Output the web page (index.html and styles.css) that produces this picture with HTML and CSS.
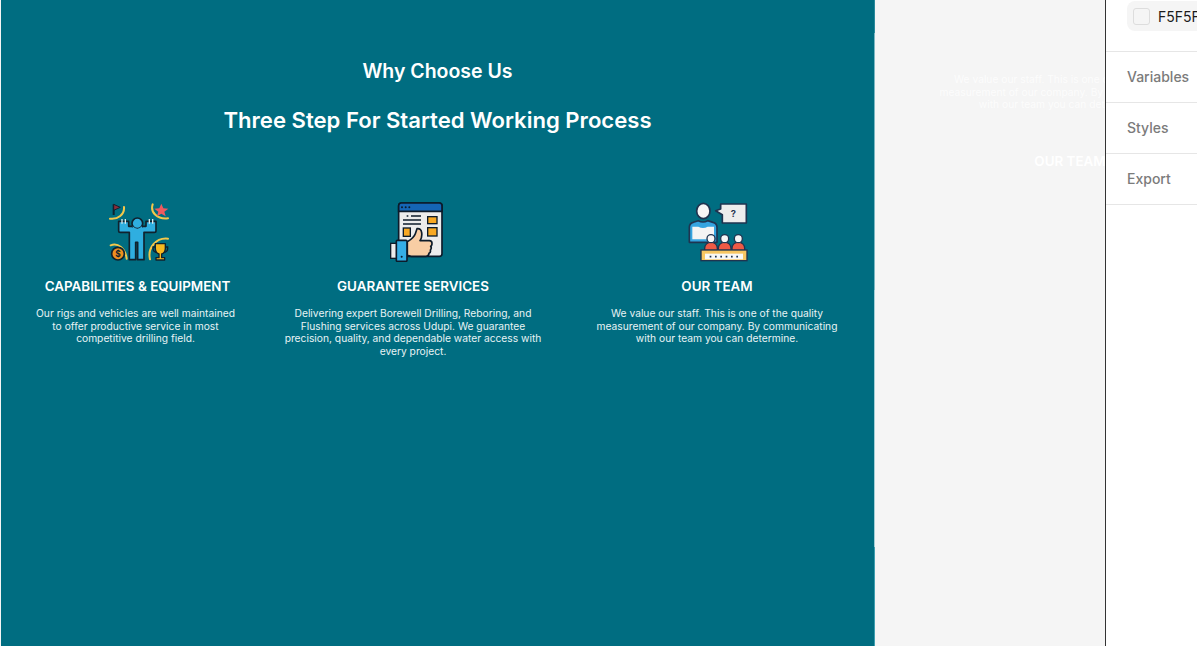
FILE: index.html
```html
<!DOCTYPE html>
<html lang="en">
<head>
<meta charset="utf-8">
<title>Why Choose Us</title>
<link rel="stylesheet" href="styles.css">
</head>
<body>
<main class="stage">
  <section class="why">
    <h2 class="why-eyebrow">Why Choose Us</h2>
    <h1 class="why-title">Three Step For Started Working Process</h1>
    <div class="cards">
      <article class="card card-one">
        <svg class="icon" viewBox="55 35 180 180" aria-hidden="true">
          <g fill="none" stroke="#f4c84a" stroke-width="6" stroke-linecap="round">
            <path d="M100 50c2 22-18 38-42 35"/>
            <path d="M186 42c-8 24 14 46 46 42"/>
            <path d="M60 165c22-8 44 8 48 40"/>
            <path d="M178 207c-8-34 18-66 54-62"/>
          </g>
          <path d="M69 42v32" stroke="#10222e" stroke-width="6"/>
          <path d="M69 42l20 9-20 9z" fill="#8c2d3a" stroke="#10222e" stroke-width="3"/>
          <path d="M212 40l6 14 15 1-12 9 4 14-13-8-13 8 4-14-12-9 15-1z" fill="#ef5a5f"/>
          <path d="M84 93h30v15h8q18 10 36 0h8V93h30v28q0 5-5 5h-31v82h-19v-52h-6v52h-19v-82H89q-5 0-5-5z" fill="#2faee0" stroke="#10222e" stroke-width="5" stroke-linejoin="round"/>
          <path d="M94 86v14M104 86v14M176 86v14M186 86v14" stroke="#dfe9ec" stroke-width="4"/>
          <circle cx="140" cy="99" r="16" fill="#2faee0" stroke="#10222e" stroke-width="5"/>
          <path d="M126 108q14 14 28 0v14h-28z" fill="#2faee0"/>
          <circle cx="82" cy="190" r="19" fill="#ef8f1f" stroke="#10222e" stroke-width="5"/>
          <text class="icon-dollar" x="82" y="199">$</text>
          <path d="M196 170h-9v5q0 10 14 12M222 170h9v5q0 10-14 12" fill="none" stroke="#10222e" stroke-width="4"/>
          <path d="M194 160h30v14q0 14-11 17v11h9v7h-26v-7h9v-11q-11-3-11-17z" fill="#f6b91f" stroke="#10222e" stroke-width="4" stroke-linejoin="round"/>
        </svg>
        <h3 class="card-title">CAPABILITIES &amp; EQUIPMENT</h3>
        <p class="card-text">Our rigs and vehicles are well maintained to offer productive service in most competitive drilling field.</p>
      </article>
      <article class="card card-two">
        <svg class="icon" viewBox="36 36 180 180" aria-hidden="true">
          <rect x="71" y="39" width="130" height="160" rx="8" fill="#ececec" stroke="#0c1b2a" stroke-width="5"/>
          <path d="M71 47a8 8 0 0 1 8-8h114a8 8 0 0 1 8 8v17H71z" fill="#1565b5" stroke="#0c1b2a" stroke-width="5"/>
          <g fill="#0c1b2a"><circle cx="81" cy="52" r="3"/><circle cx="92" cy="52" r="3"/><circle cx="103" cy="52" r="3"/></g>
          <path d="M95 78h5M108 78h30M84 90h54M84 102h54" stroke="#0c1b2a" stroke-width="4" fill="none"/>
          <rect x="158" y="80" width="28" height="21" fill="#f7a823" stroke="#0c1b2a" stroke-width="4"/>
          <rect x="158" y="113" width="28" height="25" fill="#f7a823" stroke="#0c1b2a" stroke-width="4"/>
          <rect x="85" y="114" width="21" height="25" fill="#f7a823" stroke="#0c1b2a" stroke-width="4"/>
          <rect x="47" y="160" width="20" height="45" fill="#ececec" stroke="#0c1b2a" stroke-width="4"/>
          <path d="M97 155q20-12 24-24t5-15q12-2 14 12t-5 24h28q8 0 8 8t-4 9q4 6-1 11 2 7-4 10 0 8-9 9h-45q-5-2-11-3z" fill="#f8cda4" stroke="#0c1b2a" stroke-width="5" stroke-linejoin="round"/>
          <rect x="64" y="151" width="32" height="63" rx="3" fill="#35aee6" stroke="#0c1b2a" stroke-width="5"/>
          <circle cx="80" cy="200" r="3" fill="#0c1b2a"/>
        </svg>
        <h3 class="card-title">GUARANTEE SERVICES</h3>
        <p class="card-text">Delivering expert Borewell Drilling, Reboring, and Flushing services across Udupi. We guarantee precision, quality, and dependable water access with every project.</p>
      </article>
      <article class="card card-three">
        <svg class="icon" viewBox="39 36 180 180" aria-hidden="true">
          <path d="M137 42h77v57h-72v-25l-20-12 15-5z" fill="#ededed" stroke="#1f3450" stroke-width="5" stroke-linejoin="round"/>
          <text class="icon-help" x="175" y="80">?</text>
          <path d="M43 112q0-12 12-15l15-5q14 8 28 0l16 5q12 3 12 15v45H43z" fill="#35a4e0" stroke="#1f3450" stroke-width="5" stroke-linejoin="round"/>
          <path d="M52 110h18q14 8 28 0h19v38H52z" fill="#f4f4f4"/>
          <ellipse cx="85" cy="63" rx="20" ry="23" fill="#f6f6f6" stroke="#1f3450" stroke-width="5"/>
          <g fill="#ee5a45" stroke="#1f3450" stroke-width="4">
            <path d="M89 181v-6a19 19 0 0 1 38 0v6z"/>
            <path d="M130 181v-6a19 19 0 0 1 38 0v6z"/>
            <path d="M171 181v-6a19 19 0 0 1 38 0v6z"/>
          </g>
          <g fill="#f6f6f6" stroke="#1f3450" stroke-width="4">
            <circle cx="108" cy="146" r="12"/><circle cx="149" cy="146" r="12"/><circle cx="190" cy="146" r="12"/>
          </g>
          <rect x="78" y="180" width="138" height="32" fill="#f7c663" stroke="#1f3450" stroke-width="4"/>
          <rect x="90" y="191" width="114" height="17" fill="#f8f8f8"/>
          <path d="M104 200h90" stroke="#1f3450" stroke-width="5" stroke-dasharray="5 11" fill="none"/>
        </svg>
        <h3 class="card-title">OUR TEAM</h3>
        <p class="card-text">We value our staff. This is one of the quality measurement of our company. By communicating with our team you can determine.</p>
      </article>
    </div>
  </section>
  <aside class="ghost">
    <p class="ghost-text">We value our staff. This is one of the quality measurement of our company. By communicating with our team you can determine.</p>
    <h3 class="ghost-title">OUR TEAM</h3>
  </aside>
</main>
<aside class="panel">
  <div class="panel-fill">
    <div class="swatch"><span class="swatch-box"></span><span class="swatch-value">F5F5F5</span></div>
  </div>
  <div class="panel-row">Variables</div>
  <div class="panel-row">Styles</div>
  <div class="panel-row">Export</div>
</aside>
</body>
</html>
```
FILE: styles.css
```css
* { box-sizing: border-box; }
html, body { height: 100%; }
body {
  margin: 0;
  display: flex;
  height: 646px;
  overflow: hidden;
  background: #fff;
  font-family: Inter, "Liberation Sans", sans-serif;
}
.stage {
  width: 1105px;
  flex: none;
  display: flex;
  overflow: hidden;
  background: #f5f5f5;
}
.why {
  width: 874px;
  flex: none;
  margin-left: 1px;
  padding-top: 60px;
  background: #006d81;
  color: #fff;
  text-align: center;
  border-right: 1px solid #4a9cab;
  border-image: linear-gradient(#2a8a9c 0 34px, #7cb8c3 34px 290px, #a3cfd7 290px 546px, #3f9fb0 546px) 1;
}
.why-eyebrow {
  margin: 0;
  font-size: 19.5px;
  line-height: 22px;
  font-weight: 600;
}
.why-title {
  margin: 25px 0 0;
  font-size: 22.1px;
  line-height: 26px;
  font-weight: 600;
}
.cards {
  display: flex;
  margin-top: 69px;
}
.card {
  display: flex;
  flex-direction: column;
  align-items: center;
}
.card-one { width: 273px; }
.card-two { width: 278px; }
.card-three { width: 322px; padding-left: 8px; }
.icon { width: 60px; height: 60px; display: block; flex: none; }
.card-one .icon { margin-left: 2px; }
.card-two .icon { margin-left: 8px; }
.card-three .icon { margin-left: 2px; }
.card-title {
  margin: 16px 0 0;
  font-size: 13.4px;
  line-height: 17px;
  font-weight: 600;
}
.card-text {
  margin: 12px 0 0;
  font-size: 10.25px;
  line-height: 12.6px;
  font-weight: 400;
  color: #e8f3f5;
}
.card-one .card-text { width: 204px; margin-right: 4px; }
.card-two .card-text { width: 262px; }
.card-three .card-text { width: 250px; }
.icon-dollar { font: 700 25px Inter, sans-serif; fill: #10222e; text-anchor: middle; }
.icon-help { font: 700 28px Inter, sans-serif; fill: #1f3450; text-anchor: middle; }
.ghost {
  flex: none;
  width: 250px;
  margin-left: 60px;
  padding-top: 73px;
  color: #fff;
  text-align: center;
}
.ghost-text {
  margin: 0;
  font-size: 10.25px;
  line-height: 12.6px;
  opacity: .75;
}
.ghost-title {
  margin: 42px 0 0 20px;
  font-size: 13.4px;
  line-height: 17px;
  font-weight: 600;
}
.panel {
  flex: 1;
  min-width: 0;
  background: #fff;
  border-left: 1px solid #333;
  overflow: hidden;
}
.panel-fill {
  height: 52px;
  padding: 1px 0 0 21px;
  border-bottom: 1px solid #e6e6e6;
}
.swatch {
  width: 120px;
  height: 30px;
  padding-left: 6px;
  display: flex;
  align-items: center;
  gap: 8px;
  background: #f5f5f5;
  border-radius: 8px;
  font-size: 14px;
  color: #1c1c1c;
}
.swatch-box {
  width: 17px;
  height: 17px;
  flex: none;
  background: #f5f5f5;
  border: 1px solid #ddd;
  border-radius: 3px;
}
.panel-row {
  height: 51px;
  padding: 0 0 2px 21px;
  display: flex;
  align-items: center;
  font-size: 14px;
  font-weight: 500;
  color: #7b7b7b;
  border-bottom: 1px solid #e6e6e6;
}
```
